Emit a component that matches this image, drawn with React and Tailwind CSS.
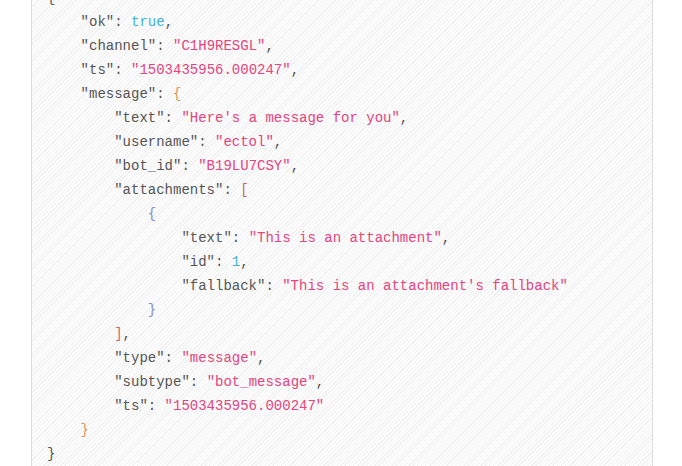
import React from "react";

const K = ({ children }) => <span className="text-[#555555]">{children}</span>;
const S = ({ children }) => <span className="text-[#e5447d]">{children}</span>;
const N = ({ children }) => <span className="text-[#3fb2de]">{children}</span>;
const P = ({ children }) => <span className="text-[#555555]">{children}</span>;
const O = ({ children }) => <span className="text-[#d9955f]">{children}</span>;
const R = ({ children }) => <span className="text-[#c96a66]">{children}</span>;
const B = ({ children }) => <span className="text-[#7f8ccc]">{children}</span>;

const lines = [
  [0, <P>{"{"}</P>],
  [1, <><K>"ok"</K><P>: </P><N>true</N><P>,</P></>],
  [1, <><K>"channel"</K><P>: </P><S>"C1H9RESGL"</S><P>,</P></>],
  [1, <><K>"ts"</K><P>: </P><S>"1503435956.000247"</S><P>,</P></>],
  [1, <><K>"message"</K><P>: </P><O>{"{"}</O></>],
  [2, <><K>"text"</K><P>: </P><S>"Here's a message for you"</S><P>,</P></>],
  [2, <><K>"username"</K><P>: </P><S>"ectol"</S><P>,</P></>],
  [2, <><K>"bot_id"</K><P>: </P><S>"B19LU7CSY"</S><P>,</P></>],
  [2, <><K>"attachments"</K><P>: </P><R>[</R></>],
  [3, <B>{"{"}</B>],
  [4, <><K>"text"</K><P>: </P><S>"This is an attachment"</S><P>,</P></>],
  [4, <><K>"id"</K><P>: </P><N>1</N><P>,</P></>],
  [4, <><K>"fallback"</K><P>: </P><S>"This is an attachment's fallback"</S></>],
  [3, <B>{"}"}</B>],
  [2, <><R>]</R><P>,</P></>],
  [2, <><K>"type"</K><P>: </P><S>"message"</S><P>,</P></>],
  [2, <><K>"subtype"</K><P>: </P><S>"bot_message"</S><P>,</P></>],
  [2, <><K>"ts"</K><P>: </P><S>"1503435956.000247"</S></>],
  [1, <O>{"}"}</O>],
  [0, <P>{"}"}</P>],
];

const indentClass = ["pl-0", "pl-[33.6px]", "pl-[67.2px]", "pl-[100.8px]", "pl-[134.4px]"];

export default function App() {
  return (
    <div className="w-[682px] h-[466px] overflow-hidden bg-white">
      <div className="ml-[31px] w-[622px] h-[520px] -mt-[14px] border-x border-[#dddddd] bg-[repeating-linear-gradient(135deg,#fdfdfd_0px,#fdfdfd_2px,#f1f1f1_2px,#f1f1f1_3px)] pl-[15px]">
        <div className="flex flex-col font-[family-name:'Liberation_Mono','Courier_New',monospace] text-[14px] leading-[24px] whitespace-pre">
          {lines.map(([lvl, content], i) => (
            <div key={i} className={indentClass[lvl]}>
              {content}
            </div>
          ))}
        </div>
      </div>
    </div>
  );
}
